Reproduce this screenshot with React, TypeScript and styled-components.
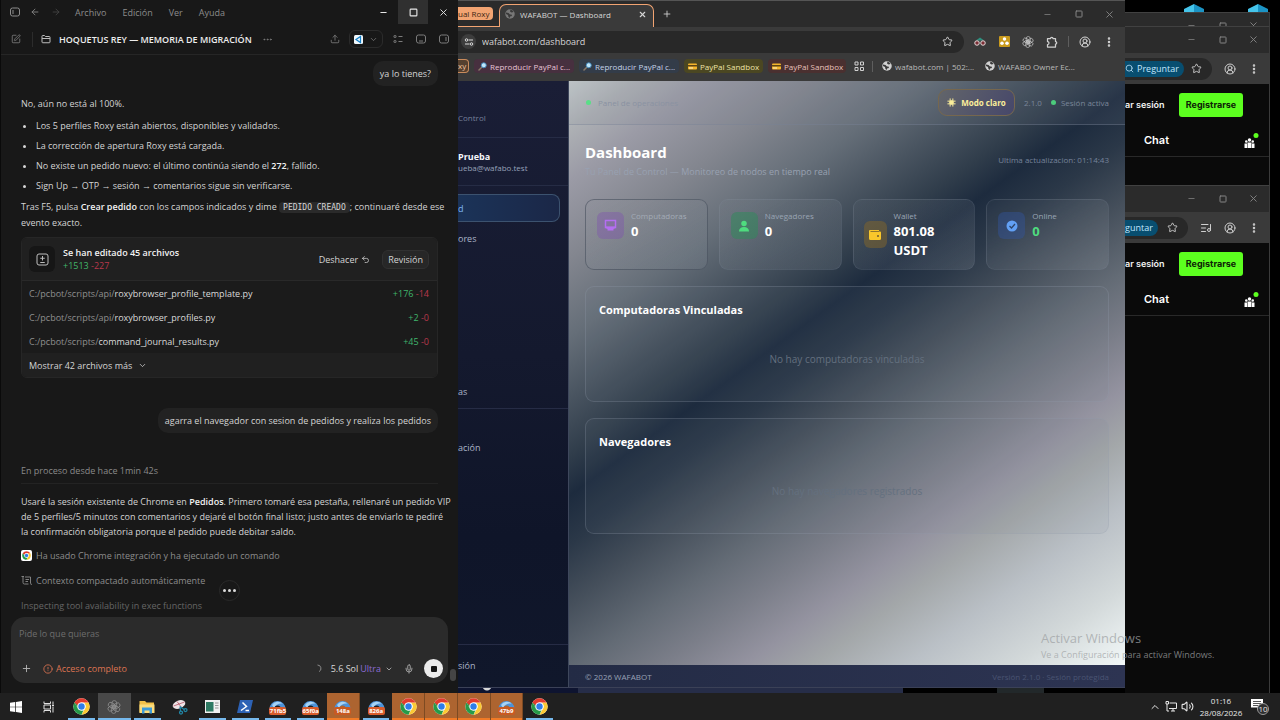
import React from "react";
import styled, { createGlobalStyle, css } from "styled-components";
import {
  ArrowLeft, ArrowRight, ChevronDown, ChevronUp, CircleAlert, CircleUserRound, EllipsisVertical,
  ListMusic, Mic, Minus, Plus, Search, Square, SquarePen, Star, Undo2, Upload, X, Ellipsis, Volume2,
} from "lucide-react";

const Global = createGlobalStyle`
  * { box-sizing: border-box; }
  html, body { margin: 0; background: #000; }
  body, button, input, textarea {
    font-family: "Open Sans", "Noto Sans", sans-serif;
    font-size: 9px;
    line-height: 15px;
  }
  button {
    border: 0; padding: 0; background: none; color: inherit;
    display: inline-flex; align-items: center; justify-content: center;
  }
  h1, h2, p, ul, dl, dd { margin: 0; padding: 0; }
  a { color: inherit; text-decoration: none; }
  svg { display: block; flex: none; }
`;

/* ---------- Desktop ---------- */

const Screen = styled.div`
  position: relative;
  display: grid;
  grid-template-rows: 1fr auto;
  min-height: 100vh;
  overflow: hidden;
  background: #000;
`;

const Windows = styled.div`
  display: grid;
  grid-template-columns: minmax(0, 458fr) minmax(0, 667fr) minmax(0, 155fr);
  min-height: 0;
`;

const Spacer = styled.span`
  flex: 1;
`;

const IconButton = styled.button<{ $w?: number }>`
  width: ${(p) => p.$w ?? 16}px;
  height: 16px;
  flex: none;
`;

/* ---------- Chat window ---------- */

const ChatWindow = styled.section`
  position: relative;
  display: flex;
  flex-direction: column;
  padding-bottom: 10px;
  background: #181818;
  border-left: 1px solid #0a0a0a;
  color: #d4d4d4;
`;

const MenuBar = styled.header`
  display: flex;
  align-items: center;
  height: 24px;
  padding-left: 7px;
  color: #8c8c8c;
`;

const Menu = styled.nav`
  display: flex;
  gap: 16px;
  margin-left: 12px;
`;

const WindowControl = styled.button<{ $active?: boolean }>`
  width: 30px;
  height: 24px;
  color: #e6e6e6;
  background: ${(p) => (p.$active ? "#303030" : "transparent")};
`;

const ChatHeader = styled.div`
  display: flex;
  align-items: center;
  gap: 8px;
  height: 31px;
  padding: 0 7px;
  border-bottom: 1px solid #262626;
  color: #7c7c7c;
`;

const HeaderRule = styled.span`
  width: 1px;
  height: 15px;
  background: #2c2c2c;
`;

const ChatTitle = styled.h1`
  font-size: 9px;
  font-weight: 600;
  line-height: 15px;
  color: #ededed;
  white-space: nowrap;
`;

const EditorPicker = styled.button`
  gap: 6px;
  width: 34px;
  height: 18px;
  border: 1px solid #2b2b2b;
  border-radius: 6px;
`;

const Messages = styled.div`
  display: flex;
  flex-direction: column;
  flex: 1;
  padding: 6px 20px 0 20px;
`;

const Bubble = styled.p`
  align-self: flex-end;
  padding: 5px 7px;
  border-radius: 10px;
  background: #222;
  white-space: nowrap;
`;

const Prose = styled.p<{ $top: number }>`
  margin-top: ${(p) => p.$top}px;
  color: #d4d4d4;
  white-space: nowrap;
`;

const Strong = styled.strong`
  font-weight: 600;
  color: #f2f2f2;
`;

const Bullets = styled.ul`
  display: flex;
  flex-direction: column;
  gap: 5px;
  margin-top: 7px;
  padding-left: 15px;
`;

const Code = styled.code`
  padding: 1px 4px;
  border-radius: 4px;
  background: #2a2a2a;
  font-family: "DejaVu Sans Mono", monospace;
  font-size: 8px;
`;

const EditCard = styled.article`
  margin-top: 7px;
  border: 1px solid #262626;
  border-radius: 6px;
  background: #1b1b1b;
  overflow: hidden;
`;

const EditHead = styled.div`
  display: flex;
  align-items: center;
  gap: 8px;
  height: 43px;
  padding: 0 8px 0 7px;
  background: #202020;
  border-bottom: 1px solid #292929;
`;

const EditIcon = styled.span`
  display: grid;
  place-items: center;
  width: 26px;
  height: 26px;
  border-radius: 6px;
  background: #161616;
  color: #bdbdbd;
`;

const EditSummary = styled.div`
  line-height: 13px;
`;

const Added = styled.span`
  color: #40b56b;
`;

const Removed = styled.span`
  color: #b8384c;
`;

const TextButton = styled.button<{ $framed?: boolean }>`
  gap: 3px;
  height: 19px;
  color: #d4d4d4;
  ${(p) => p.$framed && css`
    margin-left: 4px;
    padding: 0 5px;
    border: 1px solid #313131;
    border-radius: 6px;
    background: #272727;
  `}
`;

const FileRow = styled.div`
  display: flex;
  justify-content: space-between;
  padding: 5px 8px 4px 7px;
  color: #8f8f8f;
`;

const FileName = styled.span`
  color: #dadada;
`;

const MoreFiles = styled.button`
  display: flex;
  justify-content: flex-start;
  gap: 6px;
  width: 100%;
  height: 24px;
  padding: 0 7px;
  background: #202020;
  color: #d4d4d4;
`;

const FollowUp = styled.div`
  display: flex;
  flex-direction: column;
  margin-top: 30px;
`;

const Progress = styled.p`
  margin-top: 30px;
  padding-bottom: 5px;
  border-bottom: 1px solid #232323;
  color: #8a8a8a;
`;

const Steps = styled.div`
  display: flex;
  flex-direction: column;
  gap: 10px;
  margin-top: 9px;
`;

const Step = styled.div<{ $dim?: boolean }>`
  display: flex;
  align-items: center;
  gap: 4px;
  color: ${(p) => (p.$dim ? "#666" : "#8c8c8c")};
`;

const ChromeTile = styled.span`
  display: grid;
  place-items: center;
  width: 11px;
  height: 11px;
  border-radius: 2px;
  background: #fff;
`;

const Typing = styled.span`
  position: absolute;
  left: 50%;
  bottom: 92px;
  display: flex;
  align-items: center;
  justify-content: center;
  gap: 2px;
  width: 21px;
  height: 21px;
  margin-left: -11px;
  border: 1px solid #2a2a2a;
  border-radius: 50%;
  background: #181818;

  i { width: 3px; height: 3px; border-radius: 50%; background: #dadada; }
`;

const Composer = styled.form`
  display: flex;
  flex-direction: column;
  justify-content: space-between;
  height: 66px;
  margin: 0 10px;
  padding: 9px 5px 5px 8px;
  border-radius: 14px;
  background: #2b2b2b;
`;

const Prompt = styled.textarea`
  height: 15px;
  padding: 0;
  border: 0;
  background: none;
  resize: none;
  overflow: hidden;
  color: #ddd;
  &::placeholder { color: #6e6e6e; opacity: 1; }
`;

const ComposerTools = styled.div`
  display: flex;
  align-items: center;
  color: #b5b5b5;
`;

const Access = styled.button`
  gap: 3px;
  margin-left: 10px;
  color: #dd7452;
`;

const Model = styled.button`
  gap: 4px;
  margin: 0 10px 0 9px;
  color: #d8d8d8;
  em { font-style: normal; color: #8c6bd6; margin-left: -2px; }
`;

const Stop = styled.button`
  width: 19px;
  height: 19px;
  margin-left: 9px;
  border-radius: 50%;
  background: #ececec;
  i { width: 6px; height: 6px; border-radius: 1px; background: #161616; }
`;

const ScrollThumb = styled.span`
  position: absolute;
  right: 2px;
  bottom: 12px;
  width: 6px;
  height: 12px;
  border-radius: 3px;
  background: #454545;
`;

/* ---------- Main browser ---------- */

const BrowserColumn = styled.div`
  display: flex;
  flex-direction: column;
  min-width: 0;
`;

const Browser = styled.section`
  display: flex;
  flex-direction: column;
  flex: 1;
  min-width: 0;
  background: #3a3a3a;
  color: #d6d6d6;
  overflow: hidden;
`;

const TabStrip = styled.header`
  display: flex;
  align-items: flex-end;
  height: 27px;
  border-top: 1px solid #555;
  background: #2b2b2b;
`;

const GroupLine = styled.div`
  align-self: stretch;
  display: flex;
  align-items: center;
  width: 41px;
  padding-bottom: 1px;
  border-bottom: 1px solid #f2a472;
`;

const GroupChip = styled.span`
  padding: 0 4px 0 0;
  border-radius: 0 4px 4px 0;
  background: #f2a472;
  color: #3b2415;
  line-height: 13px;
  font-size: 8px;
  white-space: nowrap;
`;

const Tab = styled.div`
  display: flex;
  align-items: center;
  gap: 5px;
  width: 155px;
  height: 23px;
  padding: 0 6px 4px 5px;
  border: 1px solid #f2a472;
  border-bottom: 0;
  border-radius: 7px 7px 0 0;
  background: #3a3a3a;
  font-size: 8px;
  white-space: nowrap;
`;

const NewTab = styled.button`
  width: 26px;
  height: 26px;
`;

const Controls = styled.div`
  display: flex;
  align-items: center;
  align-self: stretch;
  color: #858585;
  button { width: 31px; }
`;

const Toolbar = styled.div`
  display: flex;
  align-items: center;
  gap: 8px;
  height: 29px;
  padding: 0 8px 0 0;
`;

const Address = styled.div`
  display: flex;
  align-items: center;
  flex: 1;
  gap: 6px;
  height: 22px;
  margin-right: 0;
  padding: 0 11px 0 3px;
  border-radius: 0 11px 11px 0;
  background: #282828;
`;

const SiteInfo = styled.button`
  width: 15px;
  height: 15px;
  border-radius: 50%;
  background: #3d3d3d;
`;

const Url = styled.input`
  flex: 1;
  min-width: 0;
  padding: 0;
  border: 0;
  background: none;
  color: #d6d6d6;
`;

const Bookmarks = styled.nav`
  display: flex;
  align-items: center;
  gap: 5px;
  height: 25px;
  padding-bottom: 5px;
  overflow: hidden;
`;

const Bookmark = styled.a<{ $bg?: string; $fg?: string; $w: number }>`
  display: flex;
  align-items: center;
  gap: 3px;
  width: ${(p) => p.$w}px;
  height: 14px;
  padding: 0 4px;
  flex: none;
  border-radius: 4px;
  background: ${(p) => p.$bg ?? "transparent"};
  color: ${(p) => p.$fg ?? "#b9b9b9"};
  font-size: 8px;
  white-space: nowrap;
`;

const SavedGroup = styled.span`
  width: 11px;
  height: 14px;
  border: 1px solid #c98b5c;
  border-left: 0;
  border-radius: 0 4px 4px 0;
  background: #55402f;
  color: #f2c4a0;
  font-size: 8px;
  line-height: 12px;
`;

const BarRule = styled.span`
  width: 1px;
  height: 11px;
  background: #5e5e5e;
`;

const Page = styled.div`
  display: grid;
  grid-template-columns: minmax(0, 111fr) minmax(0, 556fr);
  flex: 1;
  border-bottom: 1px solid #3b4157;
`;

const Sidebar = styled.aside`
  display: flex;
  flex-direction: column;
  overflow: hidden;
  background: linear-gradient(180deg, #1a1e36 0%, #14192e 45%, #0f1529 75%, #10172b 100%);
  border-right: 1px solid #3e475c;
  color: #aab4c8;
  white-space: nowrap;
`;

const SideSection = styled.div<{ $h: number; $line?: boolean; $start?: boolean }>`
  display: flex;
  flex-direction: column;
  justify-content: ${(p) => (p.$start ? "flex-start" : "flex-end")};
  height: ${(p) => p.$h}px;
  border-bottom: 1px solid ${(p) => (p.$line ? "#262c45" : "transparent")};
`;

const SideSmall = styled.span`
  padding-bottom: 12px;
  font-size: 8px;
  color: #77809a;
`;

const UserName = styled.strong`
  font-weight: 700;
  line-height: 11px;
  color: #f5f7fb;
`;

const UserMail = styled.span`
  padding-bottom: 11px;
  font-size: 8px;
  line-height: 12px;
  color: #97a1b8;
`;

const SideLink = styled.a<{ $active?: boolean }>`
  display: flex;
  align-items: center;
  height: 28px;
  margin-right: 8px;
  ${(p) => p.$active && css`
    margin-top: 8px;
    border: 1px solid #3c526f;
    border-left: 0;
    border-radius: 0 8px 8px 0;
    background: linear-gradient(90deg, #1b3358, #1b2747);
    color: #7db4f5;
  `}
`;

const Main = styled.div`
  display: flex;
  flex-direction: column;
`;

const Canvas = styled.main`
  display: flex;
  flex-direction: column;
  flex: 1;
  background: linear-gradient(
    144deg,
    #c6cccd 0%, #adb0b4 5%, #9b9ba6 10%, #83868f 18%, #656e78 26%, #4a5561 32%, #303d4b 38%, #1d2b3e 42%,
    #2b3848 47%, #454f5b 53%, #636b75 60%, #7b7e89 66%, #9493a0 72%, #a3a7a9 77%, #bac0c6 84%, #d3d9da 92%, #f2f8f8 100%
  );
`;

const TopBar = styled.header`
  display: flex;
  align-items: center;
  gap: 9px;
  height: 44px;
  padding: 0 16px 0 17px;
  border-bottom: 1px solid rgba(120, 130, 150, 0.4);
  background: rgba(120, 130, 150, 0.12);
  font-size: 8px;
  color: #7a8699;
`;

const Dot = styled.i<{ $bright?: boolean }>`
  width: 5px;
  height: 5px;
  margin-right: -4px;
  border-radius: 50%;
  background: ${(p) => (p.$bright ? "#58df86" : "#4ccb7c")};
`;

const PanelName = styled.span`
  margin-left: 2px;
  color: #8a92a2;
`;

const ThemeButton = styled.button`
  gap: 5px;
  width: 77px;
  height: 27px;
  border: 1px solid #76674e;
  border-radius: 9px;
  background: linear-gradient(120deg, #62656a, #46476a);
  font-size: 8px;
  font-weight: 700;
  color: #fbee9b;
`;

const Content = styled.div`
  display: flex;
  flex-direction: column;
  gap: 16px;
  padding: 16px;
`;

const PageHead = styled.div`
  display: flex;
  align-items: center;
  justify-content: space-between;
  height: 42px;
  padding-bottom: 5px;
  color: #98a1b1;
`;

const PageTitle = styled.h2`
  font-size: 15px;
  font-weight: 700;
  line-height: 23px;
  color: #fff;
`;

const Updated = styled.span`
  font-size: 8px;
  color: #76839a;
`;

const Stats = styled.div`
  display: grid;
  grid-template-columns: repeat(4, minmax(0, 1fr));
  gap: 11px;
`;

const StatCard = styled.article<{ $centered?: boolean; $edge?: string }>`
  display: flex;
  align-items: ${(p) => (p.$centered ? "center" : "flex-start")};
  gap: 7px;
  height: 71px;
  padding: ${(p) => (p.$centered ? "0 10px" : "9px 11px")};
  border: 1px solid ${(p) => p.$edge ?? "rgba(130, 140, 155, 0.18)"};
  border-radius: 9px;
  background: linear-gradient(150deg, rgba(150, 158, 168, 0.06), rgba(150, 158, 168, 0.2));
`;

const StatIcon = styled.span<{ $bg: string; $small?: boolean }>`
  display: grid;
  place-items: center;
  width: ${(p) => (p.$small ? 23 : 27)}px;
  height: 27px;
  margin-top: ${(p) => (p.$small ? 0 : 3)}px;
  flex: none;
  border-radius: 6px;
  background: ${(p) => p.$bg};
`;

const StatText = styled.dl`
  dt { font-size: 8px; line-height: 13px; color: #9aa5b4; }
  dd { font-size: 13px; line-height: 19px; font-weight: 700; color: #fff; }
`;

const DimTerm = styled.dt`
  && { color: #a3abb6; }
`;

const OnlineValue = styled.dd`
  && { color: #4fdc7f; }
`;

const Panel = styled.section`
  height: 116px;
  padding: 15px 13px;
  border: 1px solid rgba(150, 160, 175, 0.25);
  border-radius: 9px;
  background: rgba(120, 130, 145, 0.08);
  h2 { font-size: 11px; line-height: 16px; font-weight: 700; color: #fff; }
`;

const Empty = styled.p`
  margin-top: 34px;
  text-align: center;
  font-size: 10px;
  color: #64707f;
`;

const PageFooter = styled.footer`
  display: flex;
  align-items: center;
  justify-content: space-between;
  height: 22px;
  padding: 0 16px;
  background: linear-gradient(90deg, #232b45, #2d3452);
  font-size: 8px;
  color: #98a1b5;
`;

const FooterNote = styled.span`
  color: #4a5372;
`;

const Behind = styled.div`
  display: grid;
  grid-template-columns: 120fr 325fr 87fr 7fr 47fr 81fr;
  height: 5px;
  overflow: hidden;
  i:nth-child(1) { background: radial-gradient(circle at 29px -2px, #d8d8d8 4px, #0e1430 5px); }
  i:nth-child(2) { background: #262d48; }
  i:nth-child(5) { background: #22282a; }
`;

/* ---------- Windows behind, on the right ---------- */

const BackColumn = styled.div`
  display: flex;
  flex-direction: column;
  min-width: 0;
  padding-right: 10px;
`;

const DesktopIcons = styled.div`
  display: flex;
  justify-content: flex-end;
  gap: 44px;
  height: 12px;
  padding: 4px 2px 0 0;
`;

const BackWindow = styled.section`
  display: flex;
  flex-direction: column;
  background: #0a0a0a;
  border-right: 1px solid #3b3b3b;
  border-top: 1px solid #414141;
  overflow: hidden;
`;

const BackTitle = styled.header<{ $h: number }>`
  display: flex;
  align-items: flex-start;
  justify-content: flex-end;
  height: ${(p) => p.$h}px;
  overflow: hidden;
  background: #2b2b2b;
  color: #858585;
  button { width: 31px; height: 25px; flex: none; }
`;

const BackToolbar = styled.div`
  display: flex;
  align-items: center;
  justify-content: space-between;
  height: 31px;
  padding-right: 9px;
  background: #3a3a3a;
  color: #cfcfcf;
`;

const BackAddress = styled.div<{ $end: number }>`
  display: flex;
  align-items: center;
  justify-content: space-between;
  width: ${(p) => p.$end}px;
  height: 22px;
  padding-right: 10px;
  border-radius: 0 11px 11px 0;
  background: #282828;
`;

const Ask = styled.button`
  gap: 3px;
  height: 16px;
  padding-right: 5px;
  border-radius: 0 8px 8px 0;
  background: #084e70;
  color: #c2e7ff;
  white-space: nowrap;
`;

const SiteBar = styled.div`
  display: flex;
  align-items: center;
  justify-content: space-between;
  height: 41px;
  padding-right: 26px;
  font-family: Inter, sans-serif;
  font-weight: 600;
  color: #f2f2f2;
  white-space: nowrap;
`;

const Register = styled.button`
  width: 64px;
  height: 24px;
  border-radius: 3px;
  background: #5cff1f;
  color: #0c2206;
  font-family: Inter, sans-serif;
  font-weight: 700;
`;

const SiteNav = styled.nav`
  display: flex;
  align-items: center;
  justify-content: space-between;
  height: 32px;
  padding: 0 10px 0 19px;
  border-bottom: 1px solid #292929;
  font-family: Inter, sans-serif;
  font-size: 11px;
  font-weight: 600;
  color: #fff;
`;

const SiteBody = styled.div<{ $h?: number }>`
  height: ${(p) => (p.$h ? `${p.$h}px` : "auto")};
`;

const FillWindow = styled(BackWindow)`
  flex: 1;
`;

const Watermark = styled.div`
  position: absolute;
  right: 55px;
  bottom: 58px;
  width: 184px;
  color: rgba(160, 163, 165, 0.75);
  white-space: nowrap;
  p:first-child { font-size: 13px; line-height: 17px; }
`;

/* ---------- Taskbar ---------- */

const Taskbar = styled.footer`
  display: flex;
  justify-content: space-between;
  height: 27px;
  background: #202020;
  color: #e8e8e8;
`;

const Apps = styled.nav`
  display: grid;
  grid-template-columns: repeat(17, 1fr);
  width: 556px;
`;

const AppButton = styled.button<{ $state?: "open" | "active" | "alert" }>`
  position: relative;
  border-right: ${(p) => (p.$state === "alert" ? "1px solid #7d4a22" : "0")};
  background: ${(p) => (p.$state === "active" ? "#484848" : p.$state === "alert" ? "#ad6430" : "transparent")};
  &::after {
    content: "";
    position: absolute;
    left: ${(p) => (p.$state === "open" ? 3 : 0)}px;
    right: ${(p) => (p.$state === "open" ? 3 : 0)}px;
    bottom: 0;
    height: 2px;
    background: ${(p) => (!p.$state ? "transparent" : p.$state === "alert" ? "#f07a26" : "#76b9ed")};
  }
`;

const RoxyIcon = styled.span`
  display: flex;
  flex-direction: column;
  align-items: center;
  width: 17px;
`;

const RoxyTag = styled.span<{ $flat?: boolean }>`
  display: flex;
  justify-content: center;
  width: 17px;
  height: 8px;
  margin-top: -2px;
  border-radius: 2px;
  background: ${(p) => (p.$flat ? "#c85a22" : "#d95c2b")};
  color: #fff;
  font-size: 6px;
  font-weight: 700;
  line-height: 8px;
`;

const Tray = styled.div`
  display: flex;
  align-items: center;
  gap: 4px;
  padding-right: 9px;
`;

const Clock = styled.time`
  width: 46px;
  text-align: center;
  font-size: 8px;
  line-height: 12px;
`;

const Badge10 = styled.span`
  position: absolute;
  right: -6px;
  bottom: -5px;
  width: 12px;
  height: 12px;
  border: 1px solid #999;
  border-radius: 50%;
  background: #303030;
  font-size: 8px;
  line-height: 10px;
  text-align: center;
`;

const Notifications = styled.button`
  position: relative;
  margin: 0 8px 4px 3px;
`;

/* ---------- Drawings ---------- */

const Chrome = ({ size }: { size: number }) => (
  <svg width={size} height={size} viewBox="0 0 48 48">
    <circle cx="24" cy="24" r="23" fill="#fff" />
    <path d="M43.9 12.5A23 23 0 0 1 24 47l9.9-17.2a11.5 11.5 0 0 0 0-11.6L30.5 12.5z" fill="#fcc934" />
    <path d="M24 47A23 23 0 0 1 4.1 12.5l9.900 17.200A11.500 11.500 0 0 0 24 35.500c2.100 0 4.100-.6 5.800-1.600z" fill="#269a48" />
    <path d="M4.1 12.5A23 23 0 0 1 43.900 12.500H24a11.500 11.500 0 0 0-10.400 6.600l-3 2.500z" fill="#e33b2e" />
    <path d="M4.1 12.5L14 29.700l-1-9z" fill="#269a48" />
    <circle cx="24" cy="24" r="11.500" fill="#fff" />
    <circle cx="24" cy="24" r="9" fill="#2f7de9" />
  </svg>
);

const Knot = ({ size, color }: { size: number; color: string }) => (
  <svg width={size} height={size} viewBox="0 0 24 24" fill="none" stroke={color} strokeWidth="1.3">
    {[0, 60, 120, 180, 240, 300].map((a) => (
      <rect key={a} x="8.500" y="1" width="8" height="13" rx="4" transform={`rotate(${a} 12 12)`} />
    ))}
  </svg>
);

const WorldIcon = ({ size, color = "#d0d0d0" }: { size: number; color?: string }) => (
  <svg width={size} height={size} viewBox="0 0 20 20">
    <circle cx="10" cy="10" r="9.500" fill={color} />
    <path d="M2 7l5 1 3 3h3l1 3-4 1v3l-3-2-1-4-4-2zM11 1l-1 4 3 2 4-1-2-3z" fill="#3a3a3a" />
  </svg>
);

const PanelIcon = ({ line }: { line: string }) => (
  <svg width="10" height="10" viewBox="0 0 20 20" fill="none" stroke="currentColor" strokeWidth="2">
    <rect x="1" y="2" width="18" height="16" rx="4" /><path d={line} />
  </svg>
);

const FolderIcon = () => (
  <svg width="10" height="10" viewBox="0 0 20 20" fill="none" stroke="#bdbdbd" strokeWidth="2" strokeLinejoin="round">
    <path d="M2 16V4.500Q2 3 3.500 3H7l2 2h7.500Q18 5 18 6.500V16q0 1.500-1.500 1.500h-13Q2 17.500 2 16zM2 9h16" />
  </svg>
);

const ListIcon = () => (
  <svg width="10" height="10" viewBox="0 0 20 20" fill="none" stroke="currentColor" strokeWidth="2">
    <rect x="2" y="3" width="4" height="4" rx="1" /><rect x="2" y="13" width="4" height="4" rx="1" />
    <path d="M11 5h8M11 15h8" />
  </svg>
);

const CompactIcon = () => (
  <svg width="11" height="11" viewBox="0 0 22 22" fill="none" stroke="currentColor" strokeWidth="1.800">
    <path d="M1 3h5M4 3v12q0 3 3 3h8M8 4h11v12M19 16l2 4M9 9h7M9 13h5" />
  </svg>
);

const PuzzleIcon = () => (
  <svg width="12" height="12" viewBox="0 0 24 24" fill="none" stroke="#d0d0d0" strokeWidth="2.500" strokeLinejoin="round">
    <path d="M3 5h6a2.500 2.500 0 0 1 5 0h5v6a2.500 2.500 0 0 1 0 5v6H3v-5a3 3 0 0 0 0-6z" />
  </svg>
);

const TilesIcon = () => (
  <svg width="10" height="10" viewBox="0 0 20 20" fill="none" stroke="#d0d0d0" strokeWidth="2">
    <path d="M2 2h6v6H2zM13 2h6v6h-6zM2 13h6v6H2zM13 13h6v6h-6z" />
  </svg>
);

const SunIcon = () => (
  <svg width="9" height="9" viewBox="0 0 20 20" fill="none" stroke="#fbee9b" strokeWidth="2.200">
    <circle cx="10" cy="10" r="4" fill="#fbee9b" />
    <path d="M7 1v18M13 1v18M1 7h18M1 13h18" />
  </svg>
);

const Magnifier = () => (
  <svg width="9" height="9" viewBox="0 0 18 18">
    <path d="M8 10L2 16" stroke="#8a7a6a" strokeWidth="3" strokeLinecap="round" />
    <circle cx="11.500" cy="6.500" r="5" fill="#bfe6fb" stroke="#3d84b8" strokeWidth="1.800" />
  </svg>
);

const Card = () => (
  <svg width="9" height="7" viewBox="0 0 18 14">
    <rect y="1" width="18" height="12" rx="2" fill="#f5b62b" />
    <rect y="4" width="18" height="3" fill="#5d4415" />
    <rect x="2" y="9" width="8" height="2" fill="#fff2c8" />
  </svg>
);

const BlueBox = () => (
  <svg width="20" height="8" viewBox="0 0 20 8">
    <path d="M0 8V5L10 0V8z" fill="#45c4ea" />
    <path d="M20 8V5L10 0V8z" fill="#1b93c4" />
  </svg>
);

const People = () => (
  <svg width="15" height="16" viewBox="0 0 30 32">
    <circle cx="24" cy="5" r="5" fill="#5cff1f" />
    <g fill="#fff">
      <circle cx="11" cy="14" r="3.500" /><circle cx="4.500" cy="17" r="2.500" /><circle cx="17.500" cy="17" r="2.500" />
      <path d="M7 19h8v11H7zM1 21h5v9H1zM16 21h5v9h-5z" />
    </g>
  </svg>
);

const Swoosh = () => (
  <svg width="17" height="10" viewBox="0 0 34 20">
    <path d="M1 20A16 16 0 0 1 33 20H24A7 7 0 0 0 10 20z" fill="#4d93d9" />
    <path d="M6 12A14 14 0 0 1 27 9C20 8 13 11 10 18z" fill="#a6d3f5" />
  </svg>
);

const TuneIcon = () => (
  <svg width="10" height="10" viewBox="0 0 20 20" fill="none" stroke="#dcdcdc" strokeWidth="2">
    <circle cx="5" cy="6" r="2.500" /><path d="M9 6h9M2 14h9" /><circle cx="15" cy="14" r="2.500" />
  </svg>
);

const Roxy = ({ tag, flat }: { tag: string; flat?: boolean }) => (
  <RoxyIcon><Swoosh /><RoxyTag $flat={flat}>{tag}</RoxyTag></RoxyIcon>
);

const Caption = () => (
  <>
    <button aria-label="Minimizar"><Minus size={9} strokeWidth={2} /></button>
    <button aria-label="Maximizar"><Square size={8} strokeWidth={3} /></button>
    <button aria-label="Cerrar"><X size={11} strokeWidth={2} /></button>
  </>
);

/* ---------- Sections ---------- */

const files = [
  { dir: "C:/pcbot/scripts/api/", name: "roxybrowser_profile_template.py", add: 176, del: 14 },
  { dir: "C:/pcbot/scripts/api/", name: "roxybrowser_profiles.py", add: 2, del: 0 },
  { dir: "C:/pcbot/scripts/", name: "command_journal_results.py", add: 45, del: 0 },
];

function Chat() {
  return (
    <ChatWindow>
      <MenuBar>
        <IconButton $w={13} aria-label="Panel"><PanelIcon line="M6 6v8" /></IconButton>
        <IconButton $w={28} aria-label="Atrás"><ArrowLeft size={10} /></IconButton>
        <IconButton $w={14} aria-label="Adelante"><ArrowRight size={10} color="#444" /></IconButton>
        <Menu>
          <button>Archivo</button><button>Edición</button><button>Ver</button><button>Ayuda</button>
        </Menu>
        <Spacer />
        <WindowControl aria-label="Minimizar"><Minus size={9} strokeWidth={3} /></WindowControl>
        <WindowControl $active aria-label="Maximizar"><Square size={9} strokeWidth={3} /></WindowControl>
        <WindowControl aria-label="Cerrar"><X size={11} strokeWidth={2} /></WindowControl>
      </MenuBar>
      <ChatHeader>
        <IconButton aria-label="Nuevo chat"><SquarePen size={10} /></IconButton>
        <HeaderRule />
        <FolderIcon />
        <ChatTitle>HOQUETUS REY — MEMORIA DE MIGRACIÓN</ChatTitle>
        <IconButton $w={16} aria-label="Más"><Ellipsis size={11} /></IconButton>
        <Spacer />
        <IconButton $w={12} aria-label="Compartir"><Upload size={10} /></IconButton>
        <EditorPicker aria-label="Abrir en editor">
          <svg width="9" height="9" viewBox="0 0 18 18">
            <rect width="18" height="18" rx="3" fill="#f2f8fc" />
            <path d="M13 3v12L4 9z" fill="none" stroke="#1581c9" strokeWidth="2.500" />
          </svg>
          <ChevronDown size={9} />
        </EditorPicker>
        <IconButton $w={14} aria-label="Lista"><ListIcon /></IconButton>
        <IconButton $w={16} aria-label="Panel inferior"><PanelIcon line="M6 14h8" /></IconButton>
        <IconButton $w={14} aria-label="Panel derecho"><PanelIcon line="M14 6v8" /></IconButton>
      </ChatHeader>
      <Messages>
        <Bubble>ya lo tienes?</Bubble>
        <Prose $top={10}>No, aún no está al 100%.</Prose>
        <Bullets>
          <li>Los 5 perfiles Roxy están abiertos, disponibles y validados.</li>
          <li>La corrección de apertura Roxy está cargada.</li>
          <li>No existe un pedido nuevo: el último continúa siendo el <Strong>272</Strong>, fallido.</li>
          <li>Sign Up → OTP → sesión → comentarios sigue sin verificarse.</li>
        </Bullets>
        <Prose $top={6}>
          Tras F5, pulsa <Strong>Crear pedido</Strong> con los campos indicados y dime <Code>PEDIDO CREADO</Code>; continuaré desde ese<br />
          evento exacto.
        </Prose>
        <EditCard>
          <EditHead>
            <EditIcon>
              <svg width="13" height="13" viewBox="0 0 26 26" fill="none" stroke="currentColor" strokeWidth="2">
                <rect x="2" y="2" width="22" height="22" rx="4" /><path d="M13 6v9M8.500 10.500h9M8.500 19h9" />
              </svg>
            </EditIcon>
            <EditSummary>
              <Strong>Se han editado 45 archivos</Strong><br />
              <Added>+1513</Added> <Removed>-227</Removed>
            </EditSummary>
            <Spacer />
            <TextButton>Deshacer <Undo2 size={9} /></TextButton>
            <TextButton $framed>Revisión</TextButton>
          </EditHead>
          {files.map((f) => (
            <FileRow key={f.name}>
              <span>{f.dir}<FileName>{f.name}</FileName></span>
              <span><Added>+{f.add}</Added> <Removed>-{f.del}</Removed></span>
            </FileRow>
          ))}
          <MoreFiles>Mostrar 42 archivos más <ChevronDown size={9} /></MoreFiles>
        </EditCard>
        <FollowUp>
          <Bubble>agarra el navegador con sesion de pedidos y realiza los pedidos</Bubble>
          <Progress>En proceso desde hace 1min 42s</Progress>
        </FollowUp>
        <Prose $top={10}>
          Usaré la sesión existente de Chrome en <Strong>Pedidos</Strong>. Primero tomaré esa pestaña, rellenaré un pedido VIP<br />
          de 5 perfiles/5 minutos con comentarios y dejaré el botón final listo; justo antes de enviarlo te pediré<br />
          la confirmación obligatoria porque el pedido puede debitar saldo.
        </Prose>
        <Steps>
          <Step><ChromeTile><Chrome size={9} /></ChromeTile>Ha usado Chrome integración y ha ejecutado un comando</Step>
          <Step><CompactIcon />Contexto compactado automáticamente</Step>
          <Step $dim>Inspecting tool availability in exec functions</Step>
        </Steps>
      </Messages>
      <Typing><i /><i /><i /></Typing>
      <Composer>
        <Prompt aria-label="Mensaje" placeholder="Pide lo que quieras" />
        <ComposerTools>
          <IconButton $w={14} aria-label="Añadir"><Plus size={11} /></IconButton>
          <Access type="button"><CircleAlert size={10} />Acceso completo</Access>
          <Spacer />
          <svg width="9" height="9" viewBox="0 0 18 18" fill="none" stroke="#8a8a8a" strokeWidth="2">
            <path d="M9 2a7 7 0 0 1 3 13.300" />
          </svg>
          <Model type="button">5.6 Sol <em>Ultra</em><ChevronDown size={8} /></Model>
          <IconButton $w={12} aria-label="Dictar"><Mic size={10} /></IconButton>
          <Stop type="button" aria-label="Detener"><i /></Stop>
        </ComposerTools>
      </Composer>
      <ScrollThumb />
    </ChatWindow>
  );
}

function Dashboard() {
  return (
    <Page>
      <Sidebar>
        <SideSection $h={57} $line><SideSmall>Control</SideSmall></SideSection>
        <SideSection $h={48} $line>
          <UserName>Prueba</UserName>
          <UserMail>ueba@wafabo.test</UserMail>
        </SideSection>
        <SideSection $h={223} $line $start>
          <SideLink href="#dashboard" $active>d</SideLink>
          <SideSection $h={31}><SideLink href="#navegadores">ores</SideLink></SideSection>
          <SideSection $h={153}><SideLink href="#cuentas">as</SideLink></SideSection>
        </SideSection>
        <SideSection $h={53}><SideLink href="#configuracion">ación</SideLink></SideSection>
        <Spacer />
        <SideSection $h={1} $line />
        <SideSection $h={42} $start><Spacer /><SideLink href="#salir">sión</SideLink><Spacer /></SideSection>
      </Sidebar>
      <Main>
        <Canvas>
          <TopBar>
            <Dot $bright />
            <PanelName>Panel de operaciones</PanelName>
            <Spacer />
            <ThemeButton><SunIcon />Modo claro</ThemeButton>
            <span>2.1.0</span>
            <Dot />
            <span>Sesión activa</span>
          </TopBar>
          <Content>
            <PageHead>
              <div>
                <PageTitle>Dashboard</PageTitle>
                <p>Tu Panel de Control — Monitoreo de nodos en tiempo real</p>
              </div>
              <Updated>Ultima actualizacion: 01:14:43</Updated>
            </PageHead>
            <Stats>
              <StatCard $edge="rgba(70, 78, 92, 0.6)">
                <StatIcon $bg="rgba(125, 80, 175, 0.38)">
                  <svg width="13" height="13" viewBox="0 0 26 26">
                    <path d="M3 3h20v14H3z" fill="none" stroke="#b56ef2" strokeWidth="3" />
                    <path d="M3 15h20v3l-4 2v3H7v-3l-4-2z" fill="#b56ef2" />
                  </svg>
                </StatIcon>
                <StatText><DimTerm>Computadoras</DimTerm><dd>0</dd></StatText>
              </StatCard>
              <StatCard>
                <StatIcon $bg="rgba(45, 140, 90, 0.5)">
                  <svg width="12" height="12" viewBox="0 0 24 24" fill="#4fdc7f">
                    <circle cx="12" cy="7" r="5.500" /><path d="M2 23c0-6 4-9 10-9s10 3 10 9z" />
                  </svg>
                </StatIcon>
                <StatText><dt>Navegadores</dt><dd>0</dd></StatText>
              </StatCard>
              <StatCard $centered>
                <StatIcon $small $bg="rgba(125, 100, 45, 0.55)">
                  <svg width="12" height="11" viewBox="0 0 24 22">
                    <path d="M2 2h18v3h2q2 0 2 2v12q0 3-3 3H3q-3 0-3-3V4q0-2 2-2z" fill="#f9c72b" />
                    <path d="M3 5h17" stroke="#6b5a30" strokeWidth="1.500" /><circle cx="18" cy="14" r="2" fill="#6b5a30" />
                  </svg>
                </StatIcon>
                <StatText><dt>Wallet</dt><dd>801.08 USDT</dd></StatText>
              </StatCard>
              <StatCard>
                <StatIcon $bg="rgba(50, 85, 155, 0.45)">
                  <svg width="12" height="12" viewBox="0 0 24 24">
                    <circle cx="12" cy="12" r="11" fill="#62a0f5" />
                    <path d="M7 12l4 4 7-8" fill="none" stroke="#2e4468" strokeWidth="2.500" />
                  </svg>
                </StatIcon>
                <StatText><dt>Online</dt><OnlineValue>0</OnlineValue></StatText>
              </StatCard>
            </Stats>
            <Panel><h2>Computadoras Vinculadas</h2><Empty>No hay computadoras vinculadas</Empty></Panel>
            <Panel><h2>Navegadores</h2><Empty>No hay navegadores registrados</Empty></Panel>
          </Content>
        </Canvas>
        <PageFooter><span>© 2026 WAFABOT</span><FooterNote>Versión 2.1.0 · Sesión protegida</FooterNote></PageFooter>
      </Main>
    </Page>
  );
}

function MainBrowser() {
  return (
    <BrowserColumn>
      <Browser>
        <TabStrip>
          <GroupLine><GroupChip>ual Roxy</GroupChip></GroupLine>
          <Tab>
            <WorldIcon size={10} color="#777" />
            WAFABOT — Dashboard
            <Spacer />
            <X size={9} strokeWidth={3} />
          </Tab>
          <NewTab aria-label="Nueva pestaña"><Plus size={10} /></NewTab>
          <Spacer />
          <Controls><Caption /></Controls>
        </TabStrip>
        <Toolbar>
          <Address>
            <SiteInfo aria-label="Información del sitio"><TuneIcon /></SiteInfo>
            <Url aria-label="Dirección" defaultValue="wafabot.com/dashboard" />
            <Star size={11} />
          </Address>
          <IconButton aria-label="Extensión">
            <svg width="12" height="10" viewBox="0 0 24 20">
              <path d="M5 6l7-5 7 5-3 1H8z" fill="#2f8f7f" />
              <circle cx="6" cy="12" r="4.500" fill="#7a2e35" stroke="#e5dada" strokeWidth="2" />
              <circle cx="18" cy="12" r="4.500" fill="#7a2e35" stroke="#e5dada" strokeWidth="2" />
            </svg>
          </IconButton>
          <IconButton aria-label="Extensión de grupos">
            <svg width="11" height="11" viewBox="0 0 22 22">
              <rect width="22" height="22" rx="2" fill="#c99a1c" />
              <g fill="#fff"><circle cx="11" cy="6" r="3.500" /><circle cx="6" cy="14.500" r="3.500" /><circle cx="16" cy="14.500" r="3.500" /></g>
            </svg>
          </IconButton>
          <IconButton aria-label="Asistente"><Knot size={12} color="#d0d0d0" /></IconButton>
          <IconButton aria-label="Extensiones"><PuzzleIcon /></IconButton>
          <BarRule />
          <IconButton aria-label="Perfil"><CircleUserRound size={12} /></IconButton>
          <IconButton aria-label="Menú"><EllipsisVertical size={12} strokeWidth={3} /></IconButton>
        </Toolbar>
        <Bookmarks>
          <SavedGroup>xy</SavedGroup>
          <Bookmark href="#r1" $w={100} $bg="#47303f" $fg="#e6c3d6"><Magnifier />Reproducir PayPal c...</Bookmark>
          <Bookmark href="#r2" $w={100} $bg="#333c49" $fg="#c3d2e8"><Magnifier />Reproducir PayPal c...</Bookmark>
          <Bookmark href="#p1" $w={79} $bg="#4b4722" $fg="#ede3a6"><Card />PayPal Sandbox</Bookmark>
          <Bookmark href="#p2" $w={78} $bg="#4a3030" $fg="#e6c0bb"><Card />PayPal Sandbox</Bookmark>
          <IconButton aria-label="Grupos"><TilesIcon /></IconButton>
          <BarRule />
          <Bookmark href="#w1" $w={98}><WorldIcon size={10} />wafabot.com | 502:...</Bookmark>
          <Bookmark href="#w2" $w={110}><WorldIcon size={10} />WAFABO Owner Ec...</Bookmark>
        </Bookmarks>
        <Dashboard />
      </Browser>
      <Behind><i /><i /><i /><i /><i /><i /></Behind>
    </BrowserColumn>
  );
}

const Site = () => (
  <>
    <SiteBar><a href="#login">ar sesión</a><Register>Registrarse</Register></SiteBar>
    <SiteNav><a href="#chat">Chat</a><People /></SiteNav>
  </>
);

function BackWindows() {
  return (
    <BackColumn>
      <DesktopIcons><BlueBox /><BlueBox /></DesktopIcons>
      <BackWindow><BackTitle $h={13}><Caption /></BackTitle></BackWindow>
      <BackWindow>
        <BackTitle $h={26}><Caption /></BackTitle>
        <BackToolbar>
          <BackAddress $end={87}><Ask><Search size={9} />Preguntar</Ask><Star size={11} /></BackAddress>
          <CircleUserRound size={12} />
          <EllipsisVertical size={12} strokeWidth={3} />
        </BackToolbar>
        <Site />
        <SiteBody $h={28} />
      </BackWindow>
      <FillWindow>
        <BackTitle $h={26}><Caption /></BackTitle>
        <BackToolbar>
          <BackAddress $end={63}><Ask>guntar</Ask><Star size={11} /></BackAddress>
          <ListMusic size={12} />
          <CircleUserRound size={12} />
          <EllipsisVertical size={12} strokeWidth={3} />
        </BackToolbar>
        <Site />
        <SiteBody />
      </FillWindow>
    </BackColumn>
  );
}

export default function App() {
  return (
    <Screen>
      <Global />
      <Windows>
        <Chat />
        <MainBrowser />
        <BackWindows />
      </Windows>
      <Taskbar>
        <Apps>
          <AppButton aria-label="Inicio">
            <svg width="12" height="12" viewBox="0 0 24 24" fill="#fff">
              <path d="M0 3.500L10.500 2v9.500H0zM12 1.800L24 0v11.500H12zM0 12.500h10.500V22L0 20.500zM12 12.500h12V24L12 22.200z" />
            </svg>
          </AppButton>
          <AppButton aria-label="Vista de tareas">
            <svg width="12" height="12" viewBox="0 0 24 24" fill="none" stroke="#e0e0e0" strokeWidth="2">
              <path d="M2 1v4h13V1M2 8h13v8H2zM2 23v-4h13v4M20 1v6M20 12v11" /><path d="M18 9h4" strokeWidth="3" />
            </svg>
          </AppButton>
          <AppButton $state="open" aria-label="Chrome"><Chrome size={17} /></AppButton>
          <AppButton $state="active" aria-label="Asistente"><Knot size={14} color="#929292" /></AppButton>
          <AppButton $state="open" aria-label="Explorador">
            <svg width="16" height="14" viewBox="0 0 32 28">
              <path d="M1 2h11l3 3h15v20H1z" fill="#f2c14a" /><path d="M1 9h30v17H1z" fill="#fbdc7c" />
              <path d="M6 15h20v12h-5v-6H11v6H6z" fill="#3d9bd9" />
            </svg>
          </AppButton>
          <AppButton aria-label="Recortes">
            <svg width="16" height="16" viewBox="0 0 32 32">
              <ellipse cx="14" cy="11" rx="13" ry="8" transform="rotate(-20 14 11)" fill="#eee3e6" />
              <path d="M3 14L25 6M10 5l9 12" stroke="#b24a5c" strokeWidth="1.500" />
              <g fill="none" stroke="#2187a8" strokeWidth="2.500"><circle cx="18" cy="27" r="3" /><circle cx="27" cy="22" r="3" /><path d="M17 24l-1-9M24 21l-8-6" /></g>
            </svg>
          </AppButton>
          <AppButton $state="open" aria-label="Editor">
            <svg width="15" height="13" viewBox="0 0 30 26">
              <rect width="30" height="26" fill="#f1f1f1" /><rect x="2" y="4" width="15" height="19" fill="#2f7a63" />
              <path d="M20 6h7M20 11h7M20 16h7" stroke="#999" strokeWidth="2" />
            </svg>
          </AppButton>
          <AppButton $state="open" aria-label="PowerShell">
            <svg width="16" height="13" viewBox="0 0 32 26">
              <path d="M6 0h26l-6 26H0z" fill="#2d62b5" />
              <path d="M11 5l8 8-11 8M17 21h7" fill="none" stroke="#fff" strokeWidth="3" />
            </svg>
          </AppButton>
          <AppButton $state="open"><Roxy tag="71fb5" /></AppButton>
          <AppButton $state="open"><Roxy tag="65f0a" /></AppButton>
          <AppButton $state="alert"><Roxy tag="148a" flat /></AppButton>
          <AppButton $state="open"><Roxy tag="826a" /></AppButton>
          <AppButton $state="alert" aria-label="Chrome 2"><Chrome size={17} /></AppButton>
          <AppButton $state="alert" aria-label="Chrome 3"><Chrome size={17} /></AppButton>
          <AppButton $state="alert" aria-label="Chrome 4"><Chrome size={17} /></AppButton>
          <AppButton $state="alert"><Roxy tag="47b9" flat /></AppButton>
          <AppButton $state="open" aria-label="Chrome 5"><Chrome size={17} /></AppButton>
        </Apps>
        <Tray>
          <ChevronUp size={12} />
          <svg width="12" height="11" viewBox="0 0 24 22" fill="none" stroke="#e8e8e8" strokeWidth="2">
            <path d="M9 4h14v11H8M12 20h8M16 15v5M2 1h5v5H2zM4 6v14h4" />
          </svg>
          <Volume2 size={13} />
          <Clock>01:16<br />28/08/2026</Clock>
          <Notifications aria-label="Notificaciones">
            <svg width="12" height="11" viewBox="0 0 24 22">
              <path d="M0 0h24v17h-8l-4 5v-5H0z" fill="#fff" /><path d="M4 5h16M4 9h16M4 13h10" stroke="#222" strokeWidth="1.500" />
            </svg>
            <Badge10>10</Badge10>
          </Notifications>
        </Tray>
      </Taskbar>
      <Watermark><p>Activar Windows</p><p>Ve a Configuración para activar Windows.</p></Watermark>
    </Screen>
  );
}
